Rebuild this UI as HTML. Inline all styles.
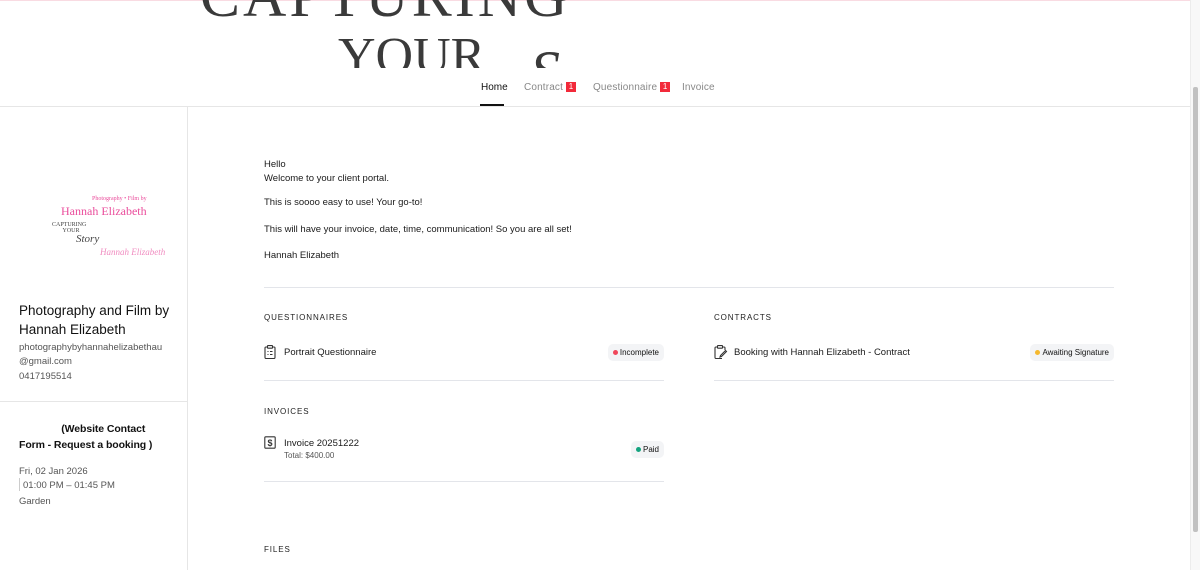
<!DOCTYPE html>
<html><head><meta charset="utf-8"><style>
*{margin:0;padding:0;box-sizing:border-box}
body{width:1200px;height:570px;overflow:hidden;background:#fff;font-family:"Liberation Sans",Arial,sans-serif;color:#111;position:relative}
.a{position:absolute;white-space:nowrap}
.s{font-size:8px;letter-spacing:.9px;color:#222}
.t{font-size:9.5px;color:#1a1a1a}
.line{position:absolute;height:1px;background:#e3e5ea}
.badge{position:absolute;background:#f3f4f6;border-radius:5px;font-size:8px;height:17px;line-height:17px;padding:0 5px 0 12px;color:#111}
.badge:before{content:"";position:absolute;left:5px;top:6px;width:5px;height:5px;border-radius:50%;background:var(--c)}
.n{display:inline-block;background:#f22a3a;color:#fff;font-size:8px;width:10px;height:10px;line-height:10px;text-align:center;margin-left:3px;vertical-align:1px}
.nav{font-size:10px;color:#888;letter-spacing:.15px}
</style></head><body>
<div class="a" style="left:0;top:0;width:1190px;height:1px;background:#f9dbe2"></div>
<div class="a" style="left:180px;top:0;width:420px;height:68px;overflow:hidden">
 <div class="a" style="left:20px;top:-38px;font-family:'Liberation Serif',serif;font-size:60px;color:#3a3a3a;letter-spacing:3px">CAPTURING</div>
 <div class="a" style="left:158px;top:27px;font-family:'Liberation Serif',serif;font-size:52px;color:#3a3a3a">YOUR</div>
 <div class="a" style="left:350px;top:38px;font-family:'Liberation Serif',serif;font-style:italic;font-size:60px;color:#3a3a3a">S</div>
</div>
<div class="a" style="left:481px;top:82px;font-size:10px;color:#111">Home</div>
<div class="a" style="left:480px;top:104px;width:24px;height:2px;background:#111"></div>
<div class="a nav" style="left:524px;top:82px">Contract<span class="n">1</span></div>
<div class="a nav" style="left:593px;top:82px">Questionnaire<span class="n">1</span></div>
<div class="a nav" style="left:682px;top:82px">Invoice</div>
<div class="a" style="left:0;top:106px;width:1190px;height:1px;background:#e6e6e6"></div>
<!-- sidebar -->
<div class="a" style="left:187px;top:107px;width:1px;height:463px;background:#e6e6e6"></div>
<div class="a" style="left:0;top:401px;width:187px;height:1px;background:#e6e6e6"></div>
<div class="a" style="left:92px;top:196px;font-family:'Liberation Serif',serif;font-size:6px;color:#ea4c9b">Photography • Film by</div>
<div class="a" style="left:61px;top:204px;font-family:'Liberation Serif',serif;font-size:12px;color:#ea4c9b">Hannah Elizabeth</div>
<div class="a" style="left:52px;top:222px;font-family:'Liberation Serif',serif;font-size:6px;color:#444;line-height:6px">CAPTURING<br>&nbsp;&nbsp;&nbsp;&nbsp;&nbsp;&nbsp;&nbsp;YOUR</div>
<div class="a" style="left:76px;top:233px;font-family:'Liberation Serif',serif;font-style:italic;font-size:11px;color:#444">Story</div>
<div class="a" style="left:100px;top:247px;font-family:'Liberation Serif',serif;font-style:italic;font-size:9px;color:#f08cc0">Hannah Elizabeth</div>
<div class="a" style="left:19px;top:301px;font-size:13.5px;line-height:19px;color:#111">Photography and Film by<br>Hannah Elizabeth</div>
<div class="a" style="left:19px;top:341px;font-size:9.5px;line-height:14px;color:#555">photographybyhannahelizabethau<br>@gmail.com</div>
<div class="a" style="left:19px;top:371px;font-size:9.5px;color:#555">0417195514</div>
<div class="a" style="left:19px;top:421px;font-size:10.5px;font-weight:bold;line-height:16px;color:#111;letter-spacing:-.1px">&nbsp;&nbsp;&nbsp;&nbsp;&nbsp;&nbsp;&nbsp;&nbsp;&nbsp;&nbsp;&nbsp;&nbsp;&nbsp;&nbsp;&nbsp;(Website Contact<br>Form - Request a booking )</div>
<div class="a" style="left:19px;top:466px;font-size:9.5px;color:#555">Fri, 02 Jan 2026</div>
<div class="a" style="left:19px;top:478px;width:1px;height:13px;background:#ccc"></div>
<div class="a" style="left:23px;top:480px;font-size:9.5px;color:#555">01:00 PM – 01:45 PM</div>
<div class="a" style="left:19px;top:496px;font-size:9.5px;color:#555">Garden</div>
<!-- main -->
<div class="a t" style="left:264px;top:158px;line-height:13.5px">Hello<br>Welcome to your client portal.</div>
<div class="a t" style="left:264px;top:197px">This is soooo easy to use! Your go-to!</div>
<div class="a t" style="left:264px;top:224px">This will have your invoice, date, time, communication! So you are all set!</div>
<div class="a t" style="left:264px;top:250px">Hannah Elizabeth</div>
<div class="line" style="left:264px;top:287px;width:850px"></div>
<div class="a s" style="left:264px;top:313px">QUESTIONNAIRES</div>
<div class="a s" style="left:714px;top:313px">CONTRACTS</div>
<svg class="a" style="left:264px;top:345px" width="12" height="14" viewBox="0 0 12 14" fill="none" stroke="#333" stroke-width="1.1"><rect x="1" y="2" width="10" height="11.5" rx="1"/><rect x="3.5" y=".6" width="5" height="2.6" rx=".5" fill="#fff"/><path d="M3.5 6.5h1M6 6.5h2.5M3.5 9.5h1M6 9.5h2.5"/></svg>
<div class="a t" style="left:284px;top:347px">Portrait Questionnaire</div>
<div class="badge" style="right:536px;top:344px;--c:#f0465a">Incomplete</div>
<div class="line" style="left:264px;top:380px;width:400px"></div>
<svg class="a" style="left:714px;top:345px" width="14" height="14" viewBox="0 0 14 14" fill="none" stroke="#333" stroke-width="1.1"><path d="M8 13.5H2a1 1 0 0 1-1-1V3a1 1 0 0 1 1-1h8a1 1 0 0 1 1 1v2"/><rect x="3.5" y=".6" width="5" height="2.6" rx=".5" fill="#fff"/><path d="M12.5 6.5l-5 5-1.5.5.5-1.5 5-5z"/></svg>
<div class="a t" style="left:734px;top:347px">Booking with Hannah Elizabeth - Contract</div>
<div class="badge" style="right:86px;top:344px;--c:#f5b82e">Awaiting Signature</div>
<div class="line" style="left:714px;top:380px;width:400px"></div>
<div class="a s" style="left:264px;top:407px">INVOICES</div>
<svg class="a" style="left:264px;top:436px" width="12" height="13" viewBox="0 0 12 13" fill="none" stroke="#333" stroke-width="1.1"><rect x=".8" y=".8" width="10.4" height="11.4" rx="1"/><text x="6" y="10" font-size="9" text-anchor="middle" fill="#333" stroke="none" font-family="Liberation Sans" font-weight="bold">$</text></svg>
<div class="a t" style="left:284px;top:438px">Invoice 20251222</div>
<div class="a" style="left:284px;top:451px;font-size:8px;color:#555">Total: $400.00</div>
<div class="badge" style="right:536px;top:441px;--c:#14a37f">Paid</div>
<div class="line" style="left:264px;top:481px;width:400px"></div>
<div class="a s" style="left:264px;top:545px">FILES</div>
<!-- scrollbar -->
<div class="a" style="left:1190px;top:0;width:10px;height:570px;background:#f8f8f8;border-left:1px solid #ececec"></div>
<div class="a" style="left:1193px;top:87px;width:5px;height:445px;background:#c1c1c1;border-radius:2px"></div>
</body></html>
